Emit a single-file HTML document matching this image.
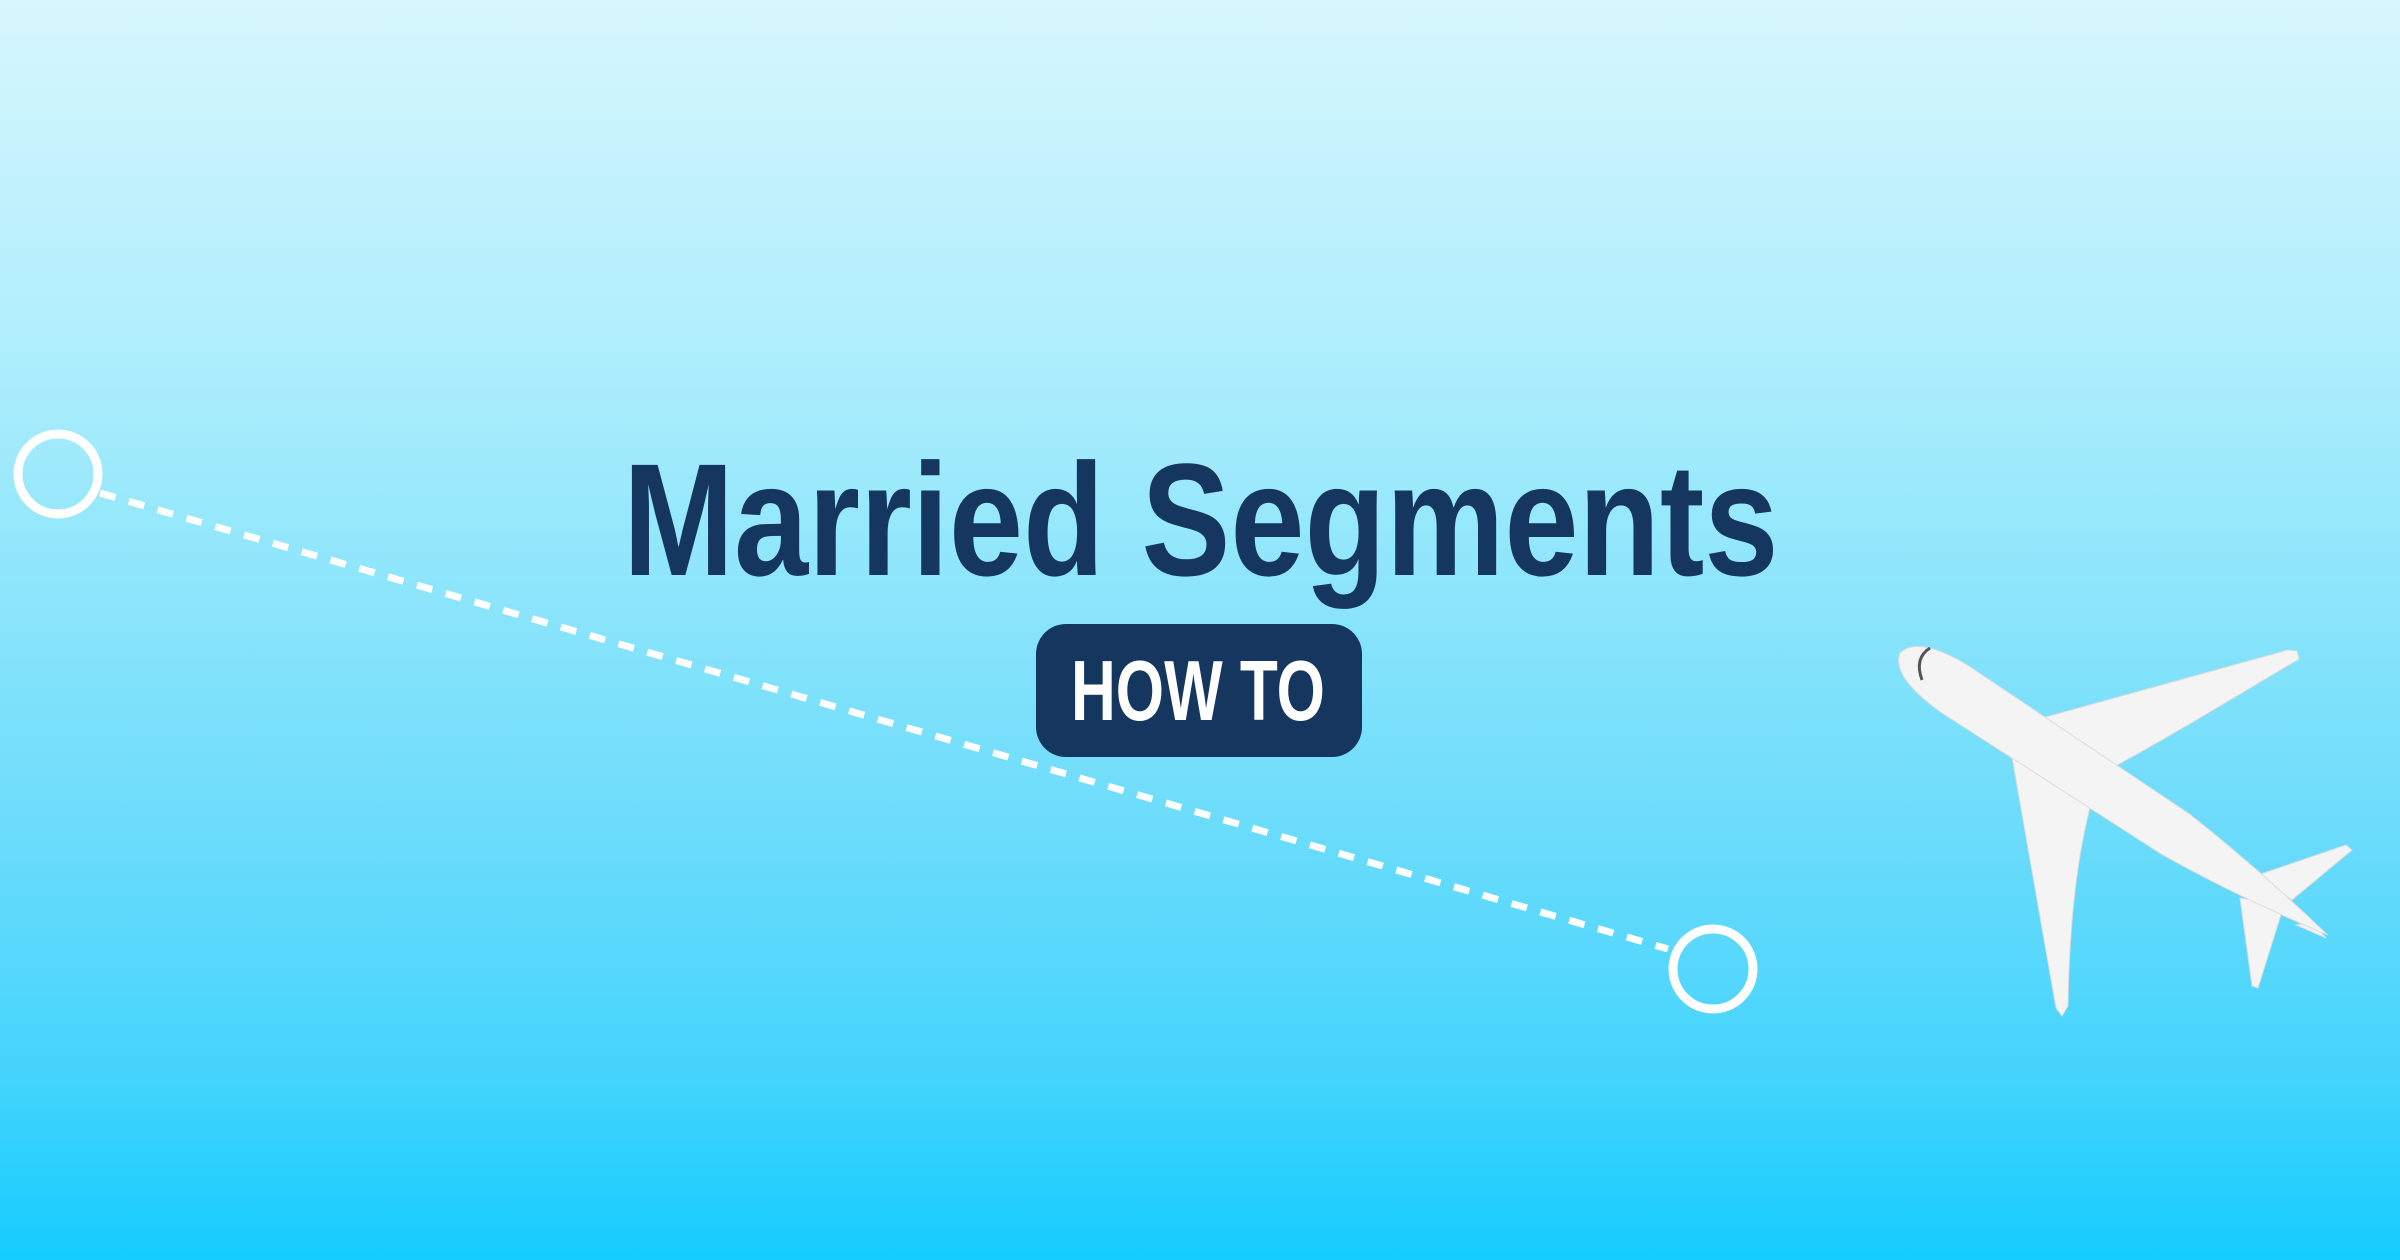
<!DOCTYPE html>
<html><head><meta charset="utf-8"><style>
html,body{margin:0;padding:0}
body{width:2400px;height:1260px;overflow:hidden;position:relative;background:linear-gradient(180deg,#d7f6fd 0%,#b3effd 25%,#90e6fb 45%,#6ddcfb 65%,#45d4fc 85%,#14ccfe 100%);font-family:"Liberation Sans",sans-serif}
.title{position:absolute;left:623px;top:428px;width:1150px;height:190px;}
.title span{position:absolute;left:0;top:0;font-weight:bold;font-size:160px;line-height:184px;color:#15375f;white-space:nowrap;transform-origin:0 0;transform:scaleX(0.833)}
.box{position:absolute;left:1036px;top:624px;width:326px;height:133px;border-radius:30px;background:#15375f}
.box span{position:absolute;left:35px;top:22px;font-weight:bold;font-size:85px;line-height:92px;color:#fff;white-space:nowrap;transform-origin:0 0;transform:scaleX(0.73)}
svg{position:absolute;left:0;top:0}
</style></head><body>
<svg width="2400" height="1260" viewBox="0 0 2400 1260">
<line x1="100" y1="493" x2="1668" y2="949" stroke="#fff" stroke-width="7" stroke-dasharray="16 14"/>
<circle cx="58" cy="474" r="40" fill="none" stroke="#fff" stroke-width="9"/>
<circle cx="1713" cy="969" r="40" fill="none" stroke="#fff" stroke-width="9"/>
<g fill="#f4f4f4" stroke="#dcdcdc" stroke-width="1">
<path d="M2035,720 L2288,650 L2297,651 L2299,659 L2230,700 Q2160,742 2108,770 Z"/>
<path d="M2012,757 L2056,1008 L2062,1016 L2068,1006 Q2070,880 2092,800 Z"/>
<path d="M2258,875 L2346,845 L2352,850 L2292,900 Z"/>
<path d="M2240,898 L2252,986 L2258,988 L2284,905 Z"/>
<path d="M2312,922 L2326,938 L2296,925 Z"/>
<g transform="translate(1900,653) rotate(33.4)">
<path d="M0,0 C4,-18 30,-27 70,-27 L330,-25 C410,-18 480,-6 512,0 C480,6 410,18 330,24 L70,27 C30,26 4,18 0,0 Z"/>
</g>
</g>
<path d="M1930,648 Q1914,658 1922,680" fill="none" stroke="#555" stroke-width="3"/>
</svg>
<div class="title"><span>Married Segments</span></div>
<div class="box"><span>HOW TO</span></div>
</body></html>
